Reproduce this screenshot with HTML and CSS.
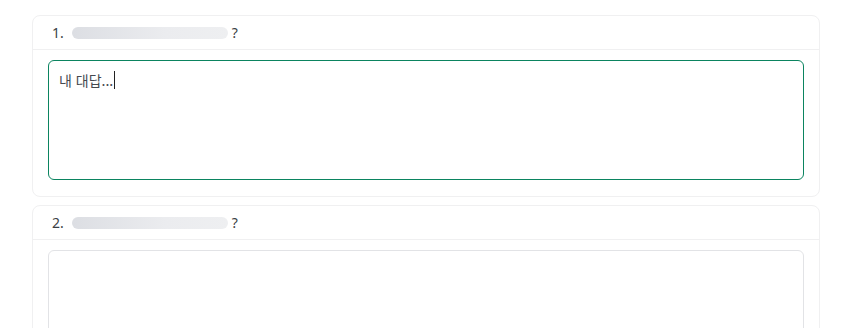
FILE: index.html
```html
<!DOCTYPE html>
<html lang="ko">
<head>
    <meta charset="UTF-8">
    <meta name="viewport" content="width=device-width, initial-scale=1.0">
    <title>질문</title>
    <link rel="stylesheet" href="styles.css">
</head>
<body>
    <div class="lista">
        <div class="card">
            <div class="pergunta">
                <span class="num">1.</span>
                <span class="skeleton"></span>
                <span class="q">?</span>
            </div>
            <div class="resposta ativo">
                <span class="texto">내 대답...</span><span class="cursor"></span>
            </div>
        </div>

        <div class="card">
            <div class="pergunta">
                <span class="num">2.</span>
                <span class="skeleton"></span>
                <span class="q">?</span>
            </div>
            <div class="resposta"></div>
        </div>
    </div>
</body>
</html>
```

FILE: styles.css
```css
* {
    padding: 0;
    margin: 0;
    box-sizing: border-box;
}

body {
    background-color: #ffffff;
    font-family: "Noto Sans", "Noto Sans CJK KR", sans-serif;
    color: #3b3f45;
}

.lista {
    display: flex;
    flex-direction: column;
    gap: 8px;
    width: 788px;
    margin: 15px 0 0 32px;
}

.card {
    border: 1px solid #f0f0f1;
    border-radius: 8px;
    background-color: white;
}

.pergunta {
    display: flex;
    align-items: center;
    height: 34px;
    padding-left: 19px;
    border-bottom: 1px solid #f0f0f1;
    font-size: 14px;
}

.num {
    margin-right: 8px;
}

.skeleton {
    width: 156px;
    height: 12px;
    border-radius: 6px;
    background: linear-gradient(90deg, #dcdee3, #ebecef 60%, #eeeff1);
    margin-right: 4px;
}

.resposta {
    height: 120px;
    margin: 10px 15px 16px 15px;
    border: 1px solid #e2e3e6;
    border-radius: 6px;
    padding: 9px 10px;
    font-family: "Noto Sans CJK KR", sans-serif;
    font-size: 14px;
    color: #45494f;
    display: flex;
    align-items: flex-start;
}

.resposta.ativo {
    border-color: #0b8460;
}

.cursor {
    display: inline-block;
    width: 1px;
    height: 18px;
    margin-left: 1px;
    margin-top: 1px;
    background-color: #222;
}
```
